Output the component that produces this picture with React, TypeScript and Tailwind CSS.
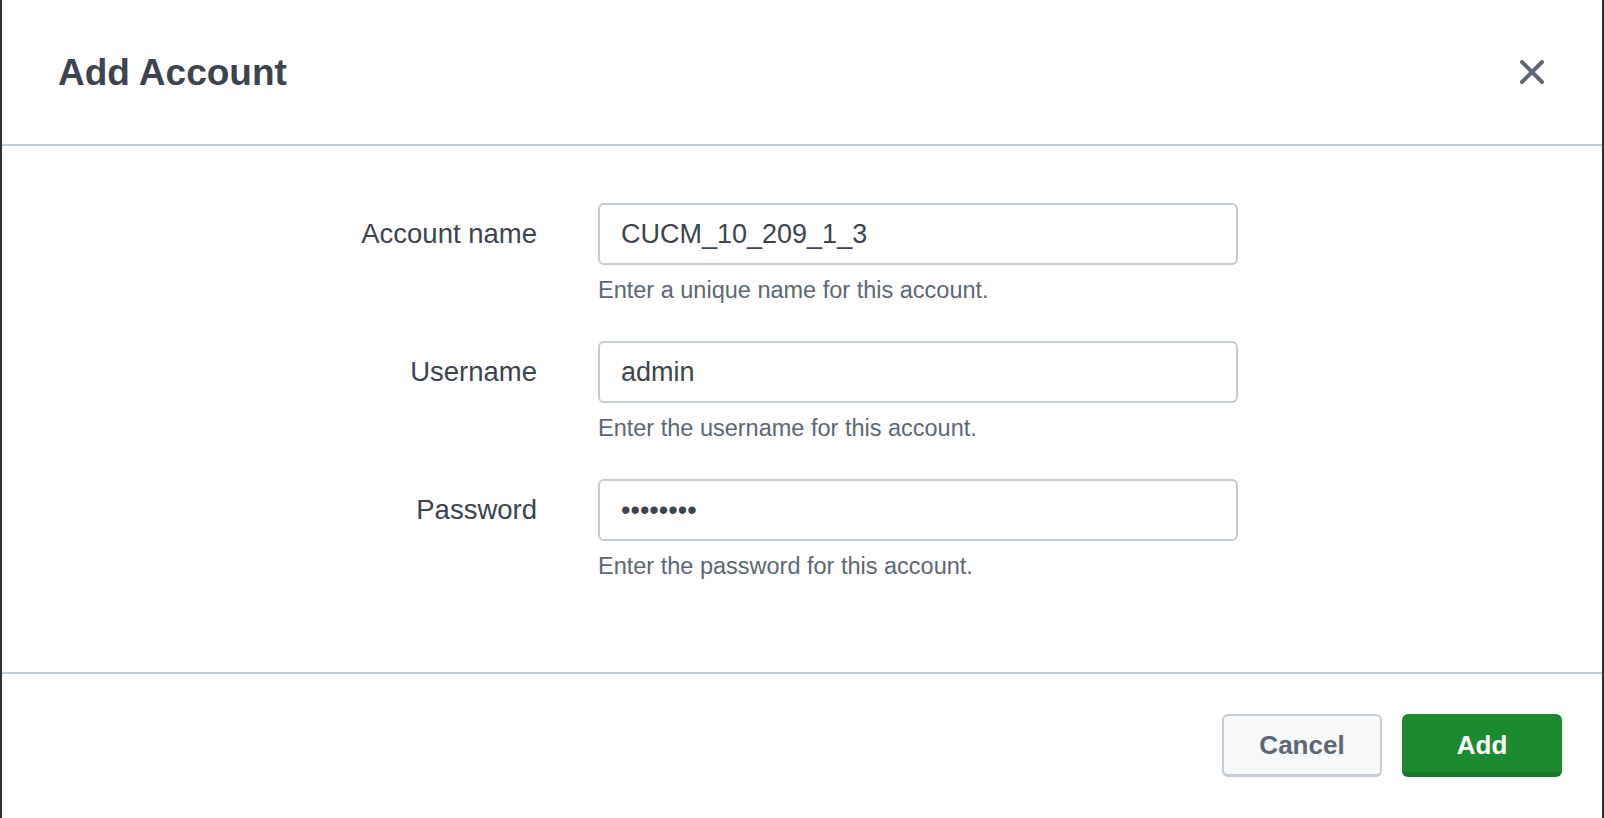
const fields = [
  { label: 'Account name', value: 'CUCM_10_209_1_3', help: 'Enter a unique name for this account.' },
  { label: 'Username', value: 'admin', help: 'Enter the username for this account.' },
  { label: 'Password', value: '••••••••', help: 'Enter the password for this account.' },
];

function CloseIcon() {
  return (
    <svg width="26" height="26" viewBox="0 0 26 26" fill="none" stroke="#5c6773" strokeWidth="4" strokeLinecap="round">
      <path d="M3 3 L23 23 M23 3 L3 23" />
    </svg>
  );
}

export default function App() {
  return (
    <div className="flex h-[818px] w-full bg-[#2d3236] px-[2px] font-['Liberation_Sans',Arial,sans-serif]">
      <div className="flex flex-1 flex-col bg-white">
        <header className="flex h-[146px] items-center justify-between border-b-2 border-[#c3cbd4] pl-[56px] pr-[57px]">
          <h1 className="text-[37px] font-bold leading-none text-[#3c444d]">Add Account</h1>
          <button className="flex size-[26px] items-center justify-center">
            <CloseIcon />
          </button>
        </header>

        <main className="flex flex-1 flex-col gap-[36px] pl-[295px] pt-[57px]">
          {fields.map((f) => (
            <div key={f.label} className="flex items-start gap-[61px]">
              <div className="flex h-[62px] w-[240px] items-center justify-end text-[27.5px] text-[#3c444d]">
                {f.label}
              </div>
              <div className="flex flex-col">
                <div className="flex h-[62px] w-[640px] items-center rounded-[6px] border-2 border-[#c3cbd4] bg-white px-[21px] text-[27px] text-[#3c444d]">
                  {f.value}
                </div>
                <div className="mt-[10px] text-[23.5px] leading-[30px] text-[#5c6773]">{f.help}</div>
              </div>
            </div>
          ))}
        </main>

        <footer className="flex h-[146px] justify-end gap-[20px] border-t-2 border-[#c3cbd4] pr-[40px] pt-[40px]">
          <button className="h-[63px] w-[160px] rounded-[6px] border-2 border-b-[3px] border-[#c3cbd4] bg-[#f7f8fa] text-[26px] font-bold text-[#5c6773]">
            Cancel
          </button>
          <button className="h-[63px] w-[160px] rounded-[6px] border-b-[5px] border-[#16782a] bg-[#1c8a2e] pt-[4px] text-[26px] font-bold text-white">
            Add
          </button>
        </footer>
      </div>
    </div>
  );
}
